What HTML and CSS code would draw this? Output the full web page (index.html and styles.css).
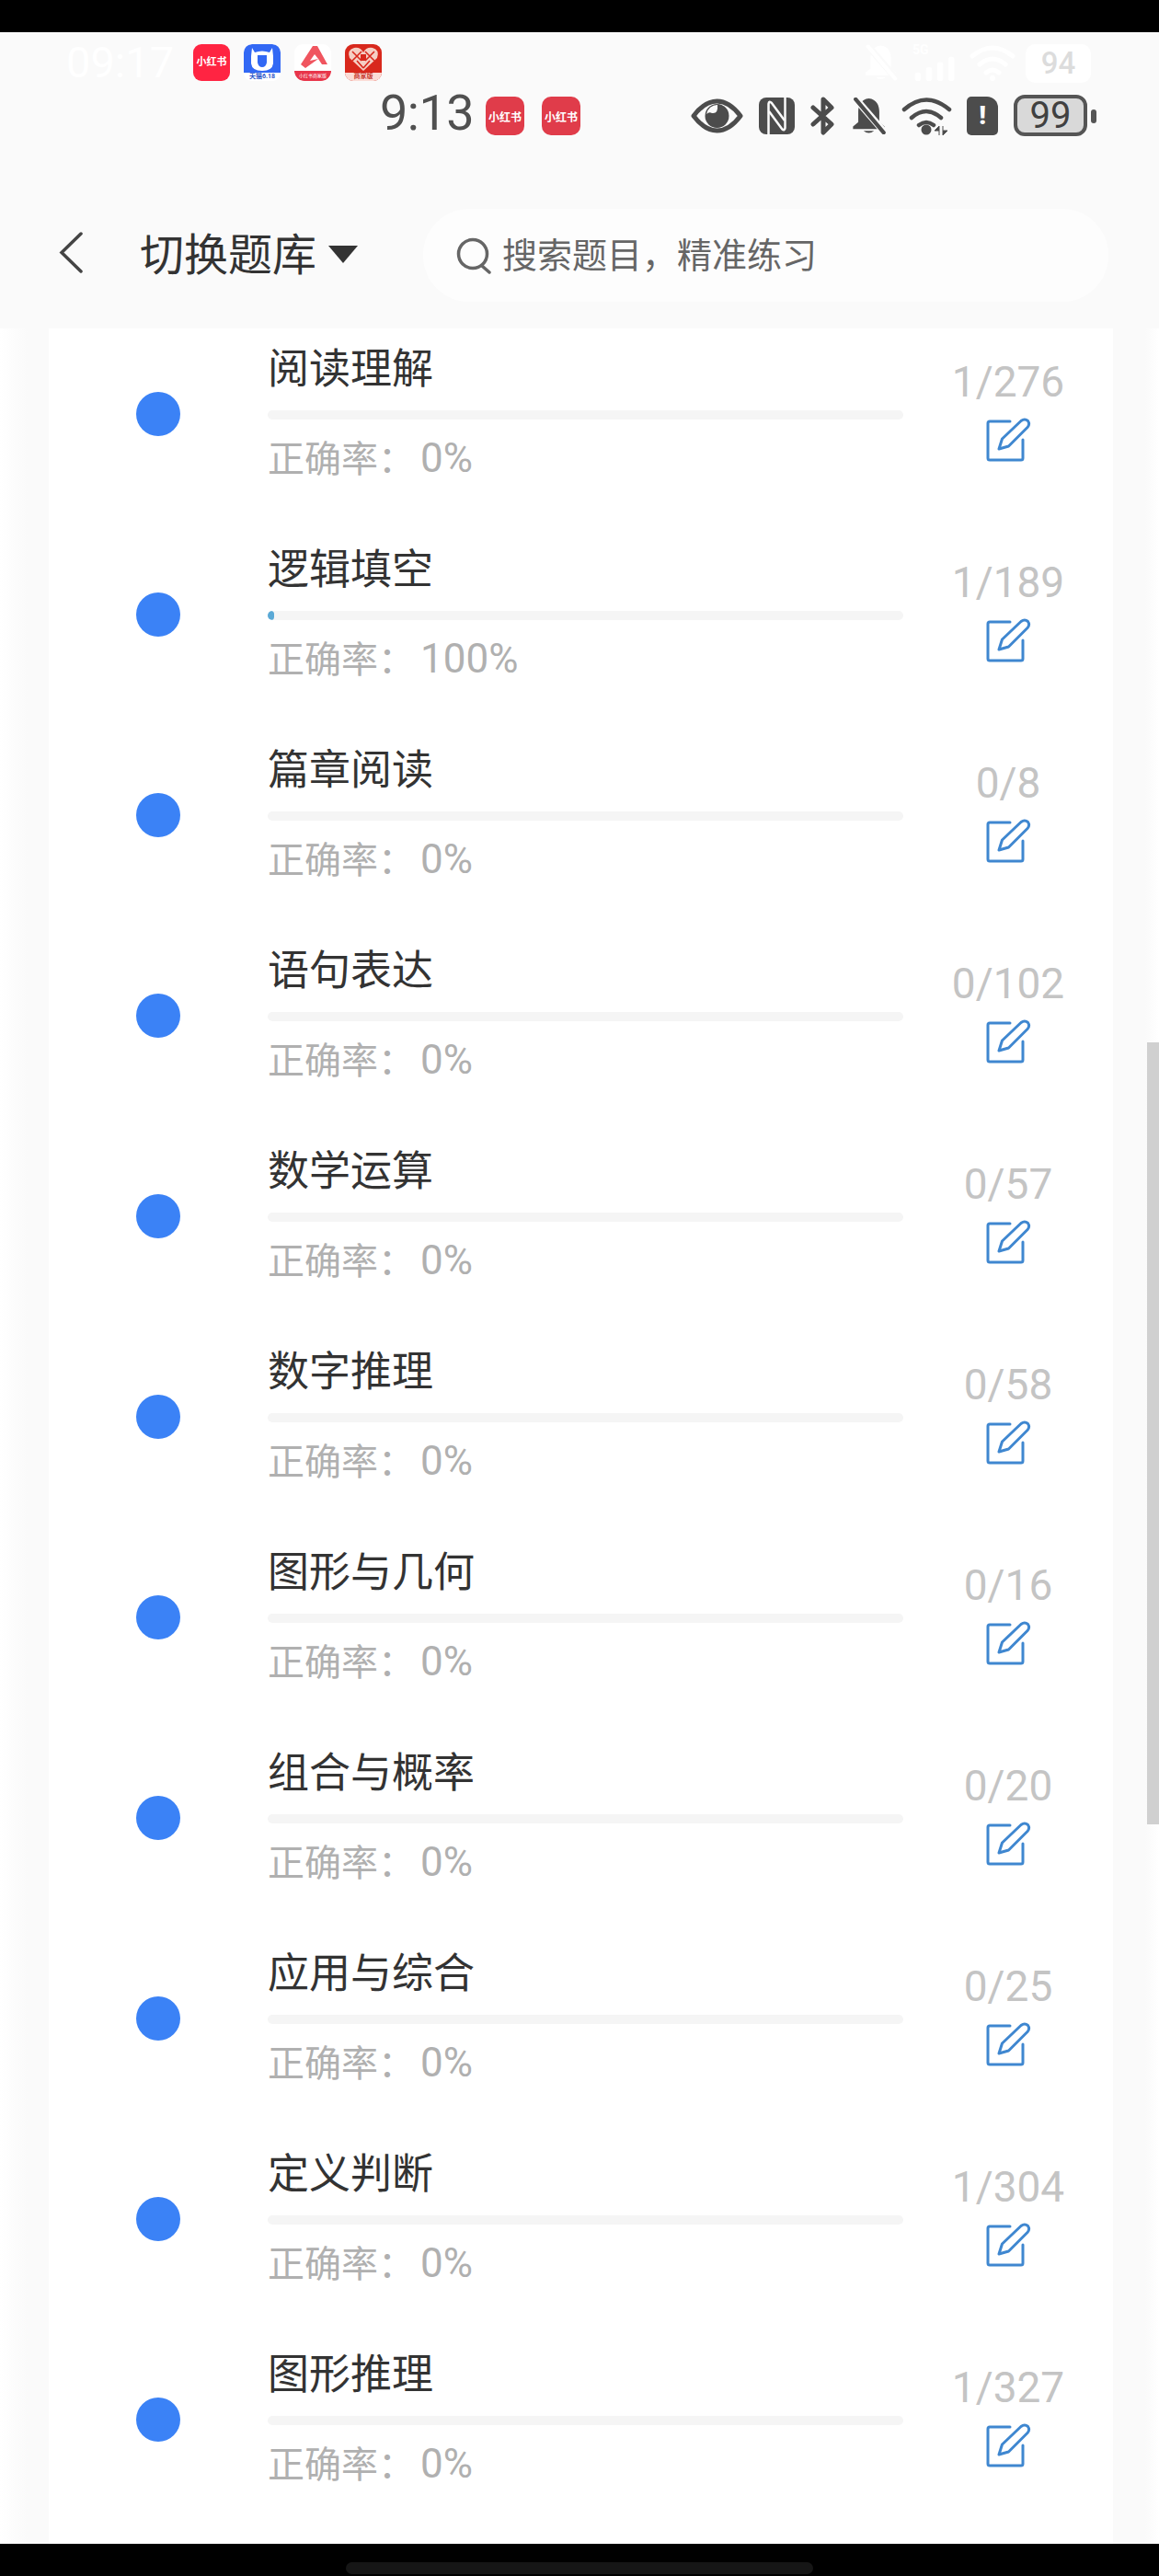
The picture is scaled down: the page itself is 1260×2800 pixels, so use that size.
FILE: index.html
```html
<!DOCTYPE html>
<html lang="zh-CN">
<head>
<meta charset="utf-8">
<title>切换题库</title>
<link rel="stylesheet" href="styles.css">
</head>
<body>
<svg class="defs" width="0" height="0" aria-hidden="true">
  <symbol id="pen" viewBox="0 0 49 49">
    <path d="M26 5H4Q2 5 2 7V45Q2 47 4 47H38Q40 47 40 45V25" fill="none" stroke="#3f87d0" stroke-width="3" stroke-linecap="round"/>
    <path d="M14 35L17.500 24L38 4.500Q42 1.500 45.500 4.500Q48 8 45 11.500L24.500 32Z" fill="none" stroke="#3f87d0" stroke-width="3" stroke-linejoin="round"/>
  </symbol>
  <symbol id="bell" viewBox="0 0 40 42">
    <path d="M20 1C11 2 8 9 8 16V28L2 33V36H38V33L32 28V16C32 9 29 2 20 1Z" fill="currentColor"/>
    <path d="M14 38Q20 43 26 38Z" fill="currentColor"/>
    <path d="M2 -2L40 42" stroke="#fafafa" stroke-width="8"/>
    <path d="M5 2L37 40" stroke="currentColor" stroke-width="4.500" stroke-linecap="round"/>
  </symbol>
</svg>
<div class="black-top"></div>

<div class="ghost-bar">
  <span class="ghost-time">09:17</span>
  <div class="apps">
    <div class="app app-red"><span class="app-word">小红书</span></div>
    <div class="app app-blue">
      <svg class="app-art" viewBox="0 0 40 31"><path d="M0 9Q0 0 9 0H31Q40 0 40 9V31H0Z" fill="#3268f4"/><path d="M9 4L12 9Q20 6 28 9L31 4L32 13V21Q31 29 20 29Q9 29 8 21V13Z" fill="#fff"/><path d="M15 12H25V20Q24 25 20 25Q16 25 15 20Z" fill="#3268f4"/></svg>
      <span class="app-label label-blue">天猫6.18</span>
    </div>
    <div class="app app-white">
      <svg class="app-art" viewBox="0 0 40 29"><path d="M20 2L25 2L36 22L30 22L26 16L12 26L7 22Z" fill="#f0555f"/><path d="M22 11L26 16L17 18Z" fill="#fff"/></svg>
      <span class="app-label label-band">小红书商家版</span>
    </div>
    <div class="app app-pdd">
      <svg class="app-art" viewBox="0 0 40 31"><path d="M20 29L5 15Q2 6 10 4Q17 3 20 9Q23 3 30 4Q38 6 35 15Z" fill="#f5cfc4"/><path d="M8 8L18 18M18 8L8 18M22 8L32 18M32 8L22 18M13 18L20 26M27 18L20 26" stroke="#d8281c" stroke-width="1.600"/><rect x="17" y="11" width="6" height="7" fill="#d8281c"/></svg>
      <span class="app-label label-pink">商家版</span>
    </div>
  </div>
  <div class="ghost-status">
    <svg class="g-bell" viewBox="0 0 40 42"><use href="#bell"/></svg>
    <div class="g-signal">
      <span class="g-5g">5G</span>
      <svg class="g-bars" viewBox="0 0 48 30"><rect x="1" y="20" width="7" height="10" rx="3"/><rect x="14" y="14" width="7" height="16" rx="3"/><rect x="27" y="8" width="7" height="22" rx="3"/><rect x="40" y="2" width="7" height="28" rx="3"/></svg>
    </div>
    <svg class="g-wifi" viewBox="0 0 50 40"><path d="M3 13Q25 -5 47 13M11 22Q25 10 39 22M18 31Q25 25 32 31" fill="none" stroke="#fff" stroke-width="5" stroke-linecap="round"/><circle cx="25" cy="37" r="3" fill="#fff"/></svg>
    <div class="g-batt">94</div>
  </div>
</div>

<div class="status-bar">
  <span class="status-time">9:13</span>
  <div class="note"><span>小红书</span></div>
  <div class="note"><span>小红书</span></div>
  <div class="status-icons">
    <svg class="i-eye" viewBox="0 0 57 38"><path d="M3 19Q15 3 28.500 3Q42 3 54 19Q42 35 28.500 35Q15 35 3 19Z" fill="none" stroke="#4c4c4c" stroke-width="5" stroke-linejoin="round"/><circle cx="28.500" cy="19" r="13" fill="#4c4c4c"/><path d="M29 7A12 12 0 0 0 17 17Q20 14 23 16Q30 17 29 7Z" fill="#fafafa"/></svg>
    <svg class="i-nfc" viewBox="0 0 39 40"><rect width="39" height="40" rx="8" fill="#4c4c4c"/><path d="M10.500 40V7Q11 3 14 6L28 25" fill="none" stroke="#fafafa" stroke-width="2.500"/><path d="M28.500 0V33Q28 37 25 34L11 15" fill="none" stroke="#fafafa" stroke-width="2.500"/></svg>
    <svg class="i-bt" viewBox="0 0 27 42"><path d="M3 12L23 30L14 39V3L23 12L3 30" fill="none" stroke="#4c4c4c" stroke-width="5" stroke-linecap="round" stroke-linejoin="round"/></svg>
    <svg class="i-bell" viewBox="0 0 40 42"><use href="#bell"/></svg>
    <svg class="i-wifi" viewBox="0 0 55 42"><path d="M3 14Q27 -7 52 14M11 23Q27 9 43 23M19 31Q27 25 35 31" fill="none" stroke="#4c4c4c" stroke-width="4.500" stroke-linecap="round"/><circle cx="27" cy="36" r="5.500" fill="#4c4c4c"/><path d="M41 42V32L36 37H41M45 32V42L50 37H45" fill="#4c4c4c" stroke="#4c4c4c"/></svg>
    <div class="i-sim"><span>!</span></div>
    <div class="i-batt"><span>99</span></div>
    <div class="i-nub"></div>
  </div>
</div>

<header class="topbar">
  <svg class="back" viewBox="0 0 26 45"><path d="M24 2L3 22.500L24 43" fill="none" stroke="#444" stroke-width="3.500" stroke-linecap="round"/></svg>
  <h1 class="bank">切换题库</h1>
  <span class="caret"></span>
  <div class="search">
    <svg class="lens" viewBox="0 0 39 40"><circle cx="18" cy="18" r="15.500" fill="none" stroke="#666" stroke-width="3.500"/><path d="M28 31L36 38" stroke="#666" stroke-width="3.500" stroke-linecap="round"/></svg>
    <span class="placeholder">搜索题目，精准练习</span>
  </div>
</header>

<main class="shade">
  <section class="card">
    <article class="row"><span class="dot"></span><div class="body"><h2 class="name">阅读理解</h2><div class="track"></div><p class="rate">正确率：<span class="pct">0%</span></p></div><div class="side"><span class="count">1/276</span><svg class="pen"><use href="#pen"/></svg></div></article>
    <article class="row"><span class="dot"></span><div class="body"><h2 class="name">逻辑填空</h2><div class="track"><div class="fill"></div></div><p class="rate">正确率：<span class="pct">100%</span></p></div><div class="side"><span class="count">1/189</span><svg class="pen"><use href="#pen"/></svg></div></article>
    <article class="row"><span class="dot"></span><div class="body"><h2 class="name">篇章阅读</h2><div class="track"></div><p class="rate">正确率：<span class="pct">0%</span></p></div><div class="side"><span class="count">0/8</span><svg class="pen"><use href="#pen"/></svg></div></article>
    <article class="row"><span class="dot"></span><div class="body"><h2 class="name">语句表达</h2><div class="track"></div><p class="rate">正确率：<span class="pct">0%</span></p></div><div class="side"><span class="count">0/102</span><svg class="pen"><use href="#pen"/></svg></div></article>
    <article class="row"><span class="dot"></span><div class="body"><h2 class="name">数学运算</h2><div class="track"></div><p class="rate">正确率：<span class="pct">0%</span></p></div><div class="side"><span class="count">0/57</span><svg class="pen"><use href="#pen"/></svg></div></article>
    <article class="row"><span class="dot"></span><div class="body"><h2 class="name">数字推理</h2><div class="track"></div><p class="rate">正确率：<span class="pct">0%</span></p></div><div class="side"><span class="count">0/58</span><svg class="pen"><use href="#pen"/></svg></div></article>
    <article class="row"><span class="dot"></span><div class="body"><h2 class="name">图形与几何</h2><div class="track"></div><p class="rate">正确率：<span class="pct">0%</span></p></div><div class="side"><span class="count">0/16</span><svg class="pen"><use href="#pen"/></svg></div></article>
    <article class="row"><span class="dot"></span><div class="body"><h2 class="name">组合与概率</h2><div class="track"></div><p class="rate">正确率：<span class="pct">0%</span></p></div><div class="side"><span class="count">0/20</span><svg class="pen"><use href="#pen"/></svg></div></article>
    <article class="row"><span class="dot"></span><div class="body"><h2 class="name">应用与综合</h2><div class="track"></div><p class="rate">正确率：<span class="pct">0%</span></p></div><div class="side"><span class="count">0/25</span><svg class="pen"><use href="#pen"/></svg></div></article>
    <article class="row"><span class="dot"></span><div class="body"><h2 class="name">定义判断</h2><div class="track"></div><p class="rate">正确率：<span class="pct">0%</span></p></div><div class="side"><span class="count">1/304</span><svg class="pen"><use href="#pen"/></svg></div></article>
    <article class="row"><span class="dot"></span><div class="body"><h2 class="name">图形推理</h2><div class="track"></div><p class="rate">正确率：<span class="pct">0%</span></p></div><div class="side"><span class="count">1/327</span><svg class="pen"><use href="#pen"/></svg></div></article>
  </section>
  <div class="scrollbar"></div>
</main>

<footer class="black-bottom"><div class="home"></div></footer>
</body>
</html>
```
FILE: styles.css
```css
* { box-sizing: border-box; margin: 0; padding: 0; }
html, body { width: 1260px; height: 2800px; overflow: hidden; }
body {
  display: flex;
  flex-direction: column;
  background: #fff;
  font-family: Roboto, "Noto Sans CJK SC", sans-serif;
  color: #333;
}
.defs { position: absolute; }
.black-top { height: 35px; background: #000; flex: none; }

/* faint layer of the status bar */
.ghost-bar {
  flex: none;
  height: 65px;
  padding: 13px 0 0 72px;
  background: #fafafa;
  display: flex;
  align-items: flex-start;
}
.ghost-time { width: 138px; font-size: 47px; line-height: 40px; color: #fff; }
.apps { display: flex; gap: 15px; }
.app {
  width: 40px;
  height: 40px;
  border-radius: 9px;
  overflow: hidden;
  display: flex;
  flex-direction: column;
  align-items: center;
}
.app-red { background: #ff2442; justify-content: center; }
.app-word { color: #fff; font-size: 11px; font-weight: 700; line-height: 12px; }
.app-blue, .app-white { background: #fff; }
.app-pdd { background: #d8281c; }
.app-art { display: block; width: 40px; height: 31px; flex: none; }
.app-white .app-art { height: 29px; }
.app-label { display: block; width: 100%; text-align: center; flex: 1; white-space: nowrap; overflow: hidden; }
.label-blue { color: #2d55c8; font-size: 7px; line-height: 9px; font-weight: 700; background: #fff; }
.label-band { color: #fff; font-size: 5px; line-height: 11px; background: #e8354a; border-radius: 0 0 12px 12px; }
.label-pink { color: #c83a2e; font-size: 7px; line-height: 9px; font-weight: 700; background: #fbdcd6; }
.ghost-status { margin-left: auto; padding-right: 74px; display: flex; align-items: flex-start; color: #fff; }
.g-bell { width: 37px; height: 40px; }
.g-signal { width: 48px; height: 40px; margin-left: 16px; display: flex; flex-direction: column; }
.g-5g { font-size: 14px; line-height: 12px; font-weight: 700; color: #fff; }
.g-bars { width: 48px; height: 28px; fill: #fff; }
.g-wifi { width: 50px; height: 40px; margin-left: 14px; }
.g-batt {
  width: 71px;
  height: 42px;
  margin-left: 11px;
  background: #fff;
  border-radius: 10px;
  color: #dcdcdc;
  font-size: 33px;
  font-weight: 500;
  line-height: 42px;
  text-align: center;
}

/* main status bar */
.status-bar {
  flex: none;
  height: 55px;
  padding-left: 413px;
  background: #fafafa;
  display: flex;
  align-items: flex-start;
}
.status-time { width: 115px; font-size: 54px; line-height: 46px; color: #505050; letter-spacing: -.5px; }
.note {
  width: 42px;
  height: 42px;
  margin: 5px 19px 0 0;
  border-radius: 10px;
  background: #e03c4a;
  display: flex;
  align-items: center;
  justify-content: center;
  color: #fff;
  font-size: 12px;
  font-weight: 700;
}
.status-icons { position: relative; flex: 1; height: 55px; display: flex; align-items: flex-start; margin-left: 101px; }
.i-eye { width: 57px; height: 38px; margin-top: 7px; }
.i-nfc { width: 39px; height: 40px; margin: 6px 0 0 17px; }
.i-bt { width: 27px; height: 42px; margin: 5px 0 0 17px; }
.i-bell { width: 39px; height: 40px; margin: 6px 0 0 17px; color: #4c4c4c; }
.i-wifi { width: 55px; height: 42px; margin: 5px 0 0 16px; }
.i-sim {
  width: 34px;
  height: 42px;
  margin: 5px 0 0 16px;
  background: #4c4c4c;
  border-radius: 5px 12px 5px 5px;
  color: #fafafa;
  font-size: 28px;
  font-weight: 900;
  line-height: 42px;
  text-align: center;
}
.i-batt {
  width: 80px;
  height: 45px;
  margin: 3px 0 0 17px;
  background: #d9d9d9;
  border: 4px solid #555;
  border-radius: 12px;
  color: #404040;
  font-size: 40px;
  line-height: 37px;
  text-align: center;
}
.i-nub { width: 6px; height: 15px; margin: 19px 0 0 4px; background: #555; border-radius: 3px; }

/* title and search */
.topbar {
  flex: none;
  height: 202px;
  padding: 72px 0 0 64px;
  background: #fafafa;
  display: flex;
  align-items: flex-start;
}
.back { width: 26px; height: 45px; margin-top: 25px; flex: none; }
.bank { margin: 23px 0 0 62px; font-size: 48px; line-height: 56px; font-weight: 400; color: #333; white-space: nowrap; }
.caret {
  width: 0;
  height: 0;
  margin: 40px 0 0 13px;
  border-left: 16px solid transparent;
  border-right: 16px solid transparent;
  border-top: 19px solid #333;
  flex: none;
}
.search {
  width: 745px;
  height: 101px;
  margin-left: 71px;
  padding-left: 36px;
  background: #fdfdfd;
  border-radius: 50px;
  display: flex;
  align-items: center;
  gap: 11px;
  flex: none;
}
.lens { width: 39px; height: 40px; flex: none; }
.placeholder { font-size: 38px; line-height: 48px; color: #666; white-space: nowrap; }

/* list */
.shade {
  position: relative;
  flex: 1;
  min-height: 0;
  padding: 0 50px 0 53px;
  background: linear-gradient(90deg, #fff 0, #fafafa 30px, #fafafa 1245px, #fff 1260px);
  overflow: hidden;
}
.card { height: 100%; background: #fff; }
.row {
  height: 218px;
  padding-top: 15px;
  display: grid;
  grid-template-columns: 238px 691px 1fr;
  align-items: start;
}
.dot {
  width: 48px;
  height: 48px;
  margin: 54px 0 0 95px;
  border-radius: 50%;
  background: #3b82f6;
}
.name { font-size: 45px; line-height: 60px; font-weight: 400; color: #333; }
.track { height: 10px; margin-top: 14px; background: #f5f5f5; border-radius: 5px; overflow: hidden; }
.fill { width: 7px; height: 10px; background: #5aa9d6; border-radius: 5px; }
.rate { margin-top: 14px; font-size: 40px; line-height: 56px; color: #b0b0b0; white-space: nowrap; }
.pct { font-size: 44px; margin-left: 6px; }
.side { display: flex; flex-direction: column; align-items: center; padding: 0 38px; }
.count { margin-top: 18px; font-size: 46px; line-height: 50px; color: #c4c4c4; white-space: nowrap; }
.pen { width: 49px; height: 49px; margin-top: 13px; }
.scrollbar { position: absolute; right: 0; top: 776px; width: 13px; height: 850px; background: #d0d0d0; }

.black-bottom { flex: none; height: 35px; background: #000; padding: 20px 0 0 376px; }
.home { width: 508px; height: 13px; background: #161616; border-radius: 7px; }
```
